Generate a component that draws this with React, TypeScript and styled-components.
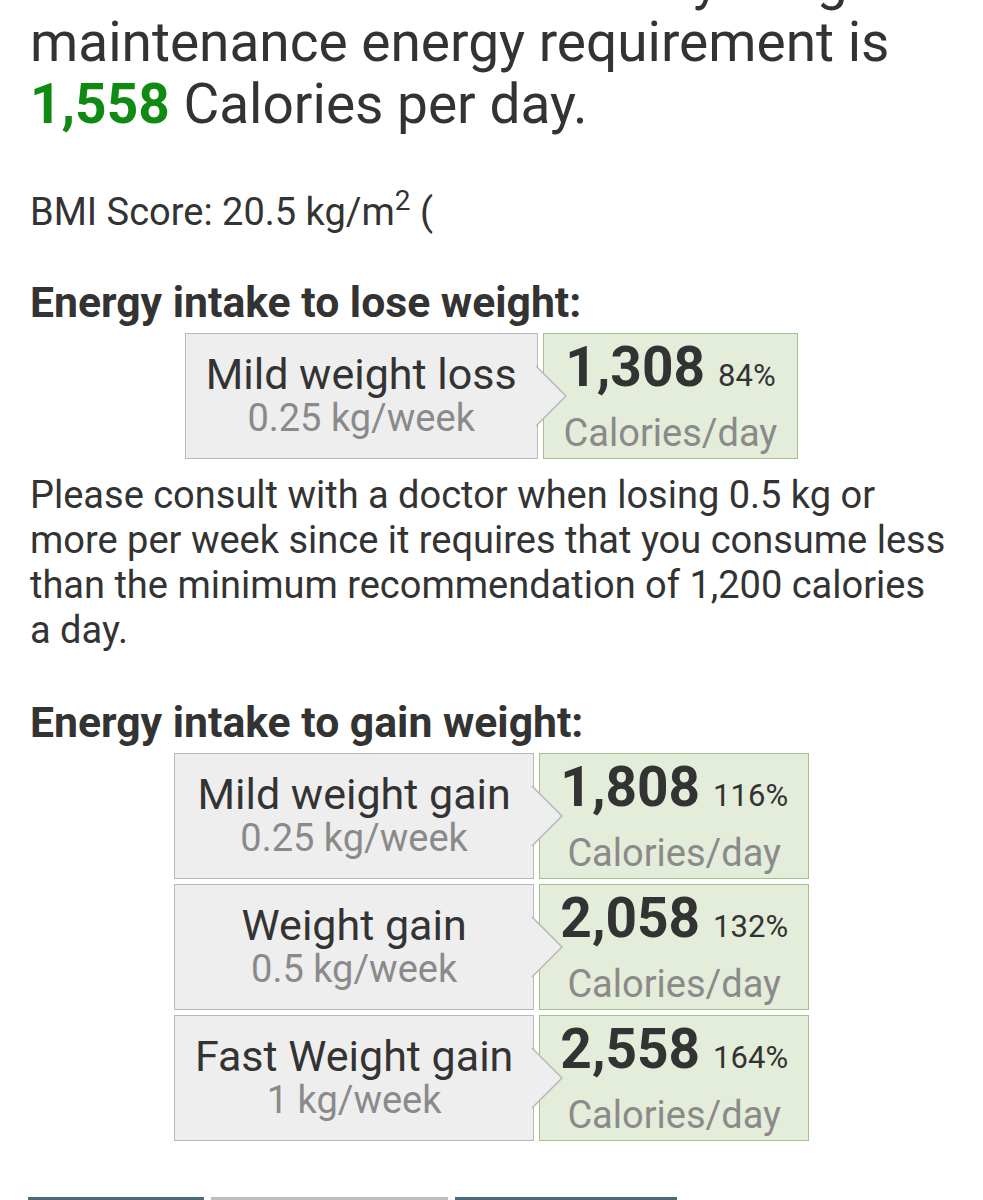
import React from "react";
import styled, { createGlobalStyle } from "styled-components";

const GlobalStyle = createGlobalStyle`
  html, body {
    margin: 0;
    padding: 0;
    background: #ffffff;
  }
  body {
    font-family: Roboto, "Noto Sans", "Liberation Sans", sans-serif;
    color: #333333;
    overflow: hidden;
  }
`;

const Page = styled.div`
  width: 983px;
  height: 1200px;
  overflow: hidden;
  box-sizing: border-box;
  padding: 0 30px;
`;

const Headline = styled.p`
  margin: -51px 0 0;
  font-size: 55px;
  line-height: 62px;
  font-weight: 400;
  color: #333333;
`;

const Highlight = styled.b`
  color: #0f8a12;
  font-weight: 700;
`;

const BmiLine = styled.p`
  margin: 55px 0 0;
  font-size: 38px;
  line-height: 44px;
`;

const Sup = styled.sup`
  font-size: 28px;
  line-height: 0;
  vertical-align: 15px;
`;

const SectionTitle = styled.h3<{ $gap: number }>`
  margin: ${(p) => p.$gap}px 0 0;
  font-size: 42.7px;
  line-height: 44px;
  font-weight: 700;
  color: #333333;
`;

const Table = styled.table<{ $gap: number }>`
  margin: ${(p) => p.$gap}px auto 0;
  border-collapse: separate;
  border-spacing: 5px;
`;

const LabelCell = styled.td`
  position: relative;
  box-sizing: border-box;
  height: 126px;
  padding: 0 20px;
  background: #eeeeee;
  border: 1px solid #b9b9b9;
  text-align: center;
  vertical-align: middle;
`;

const Arrow = styled.svg`
  position: absolute;
  left: calc(100% - 1px);
  top: 50%;
  width: 32px;
  height: 62px;
  margin-top: -31px;
  overflow: visible;
  z-index: 2;
`;

const LabelTitle = styled.div`
  font-size: 43px;
  line-height: 44px;
  color: #333333;
  white-space: nowrap;
`;

const LabelSub = styled.div`
  font-size: 38px;
  line-height: 44px;
  color: #8a8a8a;
  white-space: nowrap;
`;

const ValueCell = styled.td`
  box-sizing: border-box;
  height: 126px;
  padding: 0 20px;
  background: #e4ecda;
  border: 1px solid #a4c08c;
  text-align: center;
  vertical-align: middle;
`;

const ValueLine = styled.div`
  line-height: 60px;
  white-space: nowrap;
`;

const Number = styled.b`
  font-size: 55px;
  font-weight: 700;
  color: #333333;
`;

const Percent = styled.span`
  font-size: 31px;
  color: #333333;
  margin-left: 13px;
`;

const ValueUnit = styled.div`
  font-size: 38px;
  line-height: 44px;
  color: #8a8a8a;
  white-space: nowrap;
`;

const Note = styled.p`
  margin: 9px 0 0;
  font-size: 38px;
  line-height: 45px;
  color: #333333;
`;

const TabBar = styled.div`
  display: flex;
  gap: 7px;
  margin: 51px 0 0 -2px;
`;

const Tab = styled.div<{ $w: number; $active: boolean }>`
  width: ${(p) => p.$w}px;
  height: 40px;
  border-top: 3px solid ${(p) => (p.$active ? "#4c6b78" : "#bdbdbd")};
`;

type Row = { title: string; rate: string; kcal: string; pct: string };

const lose: Row[] = [
  { title: "Mild weight loss", rate: "0.25 kg/week", kcal: "1,308", pct: "84%" },
];

const gain: Row[] = [
  { title: "Mild weight gain", rate: "0.25 kg/week", kcal: "1,808", pct: "116%" },
  { title: "Weight gain", rate: "0.5 kg/week", kcal: "2,058", pct: "132%" },
  { title: "Fast Weight gain", rate: "1 kg/week", kcal: "2,558", pct: "164%" },
];

function ResultTable({ rows, gap }: { rows: Row[]; gap: number }) {
  return (
    <Table $gap={gap}>
      <tbody>
        {rows.map((r) => (
          <tr key={r.title}>
            <LabelCell>
              <LabelTitle>{r.title}</LabelTitle>
              <LabelSub>{r.rate}</LabelSub>
              <Arrow viewBox="0 0 32 62">
                <polygon points="0,1 30,31 0,61" fill="#eeeeee" />
                <polyline points="0,1 30,31 0,61" fill="none" stroke="#b9b9b9" strokeWidth="1.5" />
              </Arrow>
            </LabelCell>
            <ValueCell>
              <ValueLine>
                <Number>{r.kcal}</Number>
                <Percent>{r.pct}</Percent>
              </ValueLine>
              <ValueUnit>Calories/day</ValueUnit>
            </ValueCell>
          </tr>
        ))}
      </tbody>
    </Table>
  );
}

export default function App() {
  return (
    <>
      <GlobalStyle />
      <Page>
        <Headline>
          The estimated nominal daily weight maintenance energy requirement is{" "}
          <Highlight>1,558</Highlight> Calories per day.
        </Headline>
        <BmiLine>
          BMI Score: 20.5 kg/m<Sup>2</Sup> (
        </BmiLine>
        <SectionTitle $gap={46}>Energy intake to lose weight:</SectionTitle>
        <ResultTable rows={lose} gap={4} />
        <Note>
          Please consult with a doctor when losing 0.5 kg or more per week since it
          requires that you consume less than the minimum recommendation of 1,200
          calories a day.
        </Note>
        <SectionTitle $gap={47}>Energy intake to gain weight:</SectionTitle>
        <ResultTable rows={gain} gap={4} />
        <TabBar>
          <Tab $w={176} $active />
          <Tab $w={237} $active={false} />
          <Tab $w={222} $active />
        </TabBar>
      </Page>
    </>
  );
}
